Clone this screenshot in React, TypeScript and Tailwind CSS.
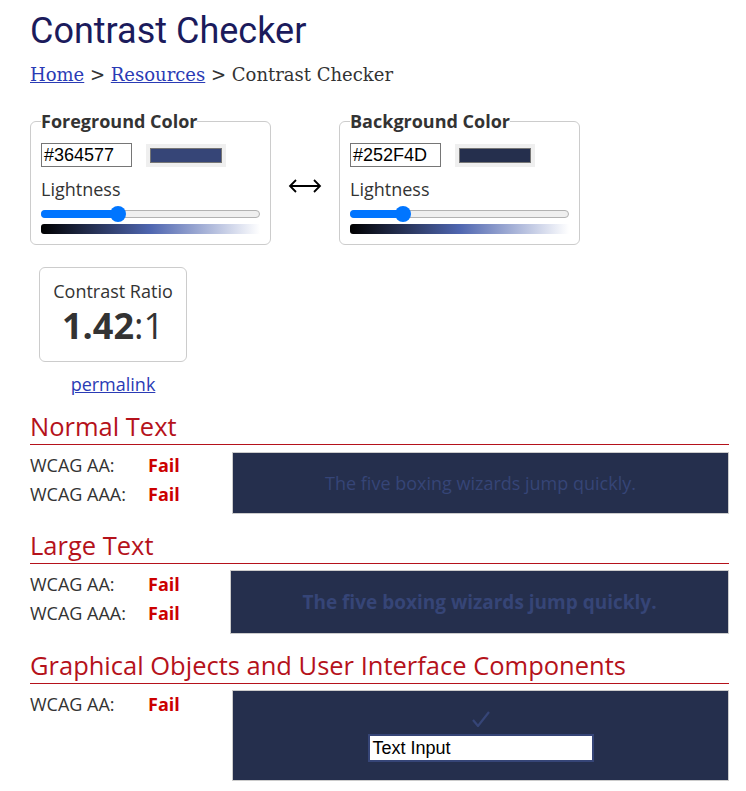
import React from "react";

const font = { fontFamily: '"Open Sans", sans-serif' };

function Slider({ pos }: { pos: number }) {
  return (
    <div className="mt-[5px]">
      <div className="relative h-[16px]">
        <div className="absolute left-0 right-0 top-[4px] h-[8px] rounded-full border border-[#b2b2b2] bg-[#efefef]" />
        <div
          className="absolute left-0 top-[4px] h-[8px] rounded-l-full bg-[#0075ff]"
          style={{ width: pos }}
        />
        <div
          className="absolute top-0 h-[16px] w-[16px] rounded-full bg-[#0075ff]"
          style={{ left: pos - 8 }}
        />
      </div>
      <div className="mt-[2px] h-[10px] rounded-l-[3px] bg-[linear-gradient(to_right,#000,#4f66b0_50%,#fff)]" />
    </div>
  );
}

function ColorBox({
  title,
  hex,
  color,
  pos,
}: {
  title: string;
  hex: string;
  color: string;
  pos: number;
}) {
  return (
    <fieldset className="w-[241px] rounded-[6px] border border-[#ccc] px-[10px] pb-[10px]">
      <legend className="px-0 text-[18px] font-bold leading-[18px] text-[#333]">
        {title}
      </legend>
      <div className="mt-[13px] flex items-center gap-[14px]">
        <div
          className="h-[24px] w-[91px] border border-[#767676] px-[2px] text-[18px] leading-[22px] text-black"
          style={{ fontFamily: '"Liberation Sans", Arial, sans-serif' }}
        >
          {hex}
        </div>
        <div className="h-[23px] w-[80px] bg-[#efefef] p-[4px]">
          <div className="h-full w-full border border-[#767676]" style={{ background: color }} />
        </div>
      </div>
      <div className="mt-[10px] text-[18px] leading-[24px] text-[#333]">Lightness</div>
      <Slider pos={pos} />
    </fieldset>
  );
}

function Section({
  title,
  rows,
  children,
  boxClass,
  first,
}: {
  title: string;
  rows: string[];
  children: React.ReactNode;
  boxClass: string;
  first?: boolean;
}) {
  return (
    <section className={first ? "mt-[11px]" : "mt-[14px]"}>
      <h2 className="border-b border-[#b5121b] pb-[1px] text-[25.5px] leading-[34px] text-[#b5121b]">
        {title}
      </h2>
      <div className="mt-[6px] flex">
        <div className="w-[200px] shrink-0">
          {rows.map((r) => (
            <div key={r} className="flex h-[29px] items-center text-[18px] text-[#333]">
              <span className="w-[118px]">{r}</span>
              <span className="font-bold text-[#c00]">Fail</span>
            </div>
          ))}
        </div>
        <div className={boxClass}>{children}</div>
      </div>
    </section>
  );
}

export default function App() {
  return (
    <div className="min-h-[791px] bg-white pl-[30px] pr-[17px] pt-[8px]" style={font}>
      <h1
        className="text-[36px] leading-[46px] text-[#1b1b5c]"
        style={{ fontFamily: "Roboto, sans-serif" }}
      >
        Contrast Checker
      </h1>
      <nav
        className="mt-[8px] text-[18px] leading-[26px] text-[#333]"
        style={{ fontFamily: '"DejaVu Serif", serif' }}
      >
        <a href="#" className="text-[#2a3bb5] underline">Home</a> &gt;{" "}
        <a href="#" className="text-[#2a3bb5] underline">Resources</a> &gt; Contrast Checker
      </nav>

      <div className="mt-[24px] flex items-center">
        <ColorBox title="Foreground Color" hex="#364577" color="#364577" pos={77} />
        <svg width="34" height="16" viewBox="0 0 34 16" className="mx-[17px] mt-[14px]">
          <path d="M2 8 H32 M8 2 L2 8 L8 14 M26 2 L32 8 L26 14" fill="none" stroke="#000" strokeWidth="1.8" />
        </svg>
        <ColorBox title="Background Color" hex="#252F4D" color="#252F4D" pos={53} />
      </div>

      <div className="ml-[9px] mt-[22px] w-[148px]">
        <div className="flex h-[95px] flex-col items-center rounded-[6px] border border-[#ccc] pt-[11px]">
          <div className="text-[18px] leading-[24px] text-[#333]">Contrast Ratio</div>
          <div className="mt-[1px] text-[36px] leading-[44px] text-[#333]">
            <span className="font-bold">1.42</span>:1
          </div>
        </div>
        <div className="mt-[9px] text-center">
          <a href="#" className="text-[18px] text-[#2a3bb5] underline">permalink</a>
        </div>
      </div>

      <Section
        first
        title="Normal Text"
        rows={["WCAG AA:", "WCAG AAA:"]}
        boxClass="mt-[1px] ml-[2px] flex h-[62px] flex-1 items-center justify-center border border-[#ccc] bg-[#252F4D] text-[18px] text-[#364577]"
      >
        The five boxing wizards jump quickly.
      </Section>

      <Section
        title="Large Text"
        rows={["WCAG AA:", "WCAG AAA:"]}
        boxClass="flex h-[64px] flex-1 items-center justify-center border border-[#ccc] bg-[#252F4D] text-[19px] font-bold text-[#364577]"
      >
        The five boxing wizards jump quickly.
      </Section>

      <Section
        title="Graphical Objects and User Interface Components"
        rows={["WCAG AA:"]}
        boxClass="ml-[2px] flex h-[91px] flex-1 flex-col items-center border border-[#ccc] bg-[#252F4D]"
      >
        <svg width="18" height="16" viewBox="0 0 18 16" className="mt-[20px]">
          <path d="M1 9 L6 15 L17 1" fill="none" stroke="#364577" strokeWidth="2.2" />
        </svg>
        <div
          className="mt-[7px] h-[28px] w-[226px] border-2 border-[#364577] bg-white px-[3px] text-[18px] leading-[24px] text-black"
          style={{ fontFamily: '"Liberation Sans", Arial, sans-serif' }}
        >
          Text Input
        </div>
      </Section>
    </div>
  );
}
